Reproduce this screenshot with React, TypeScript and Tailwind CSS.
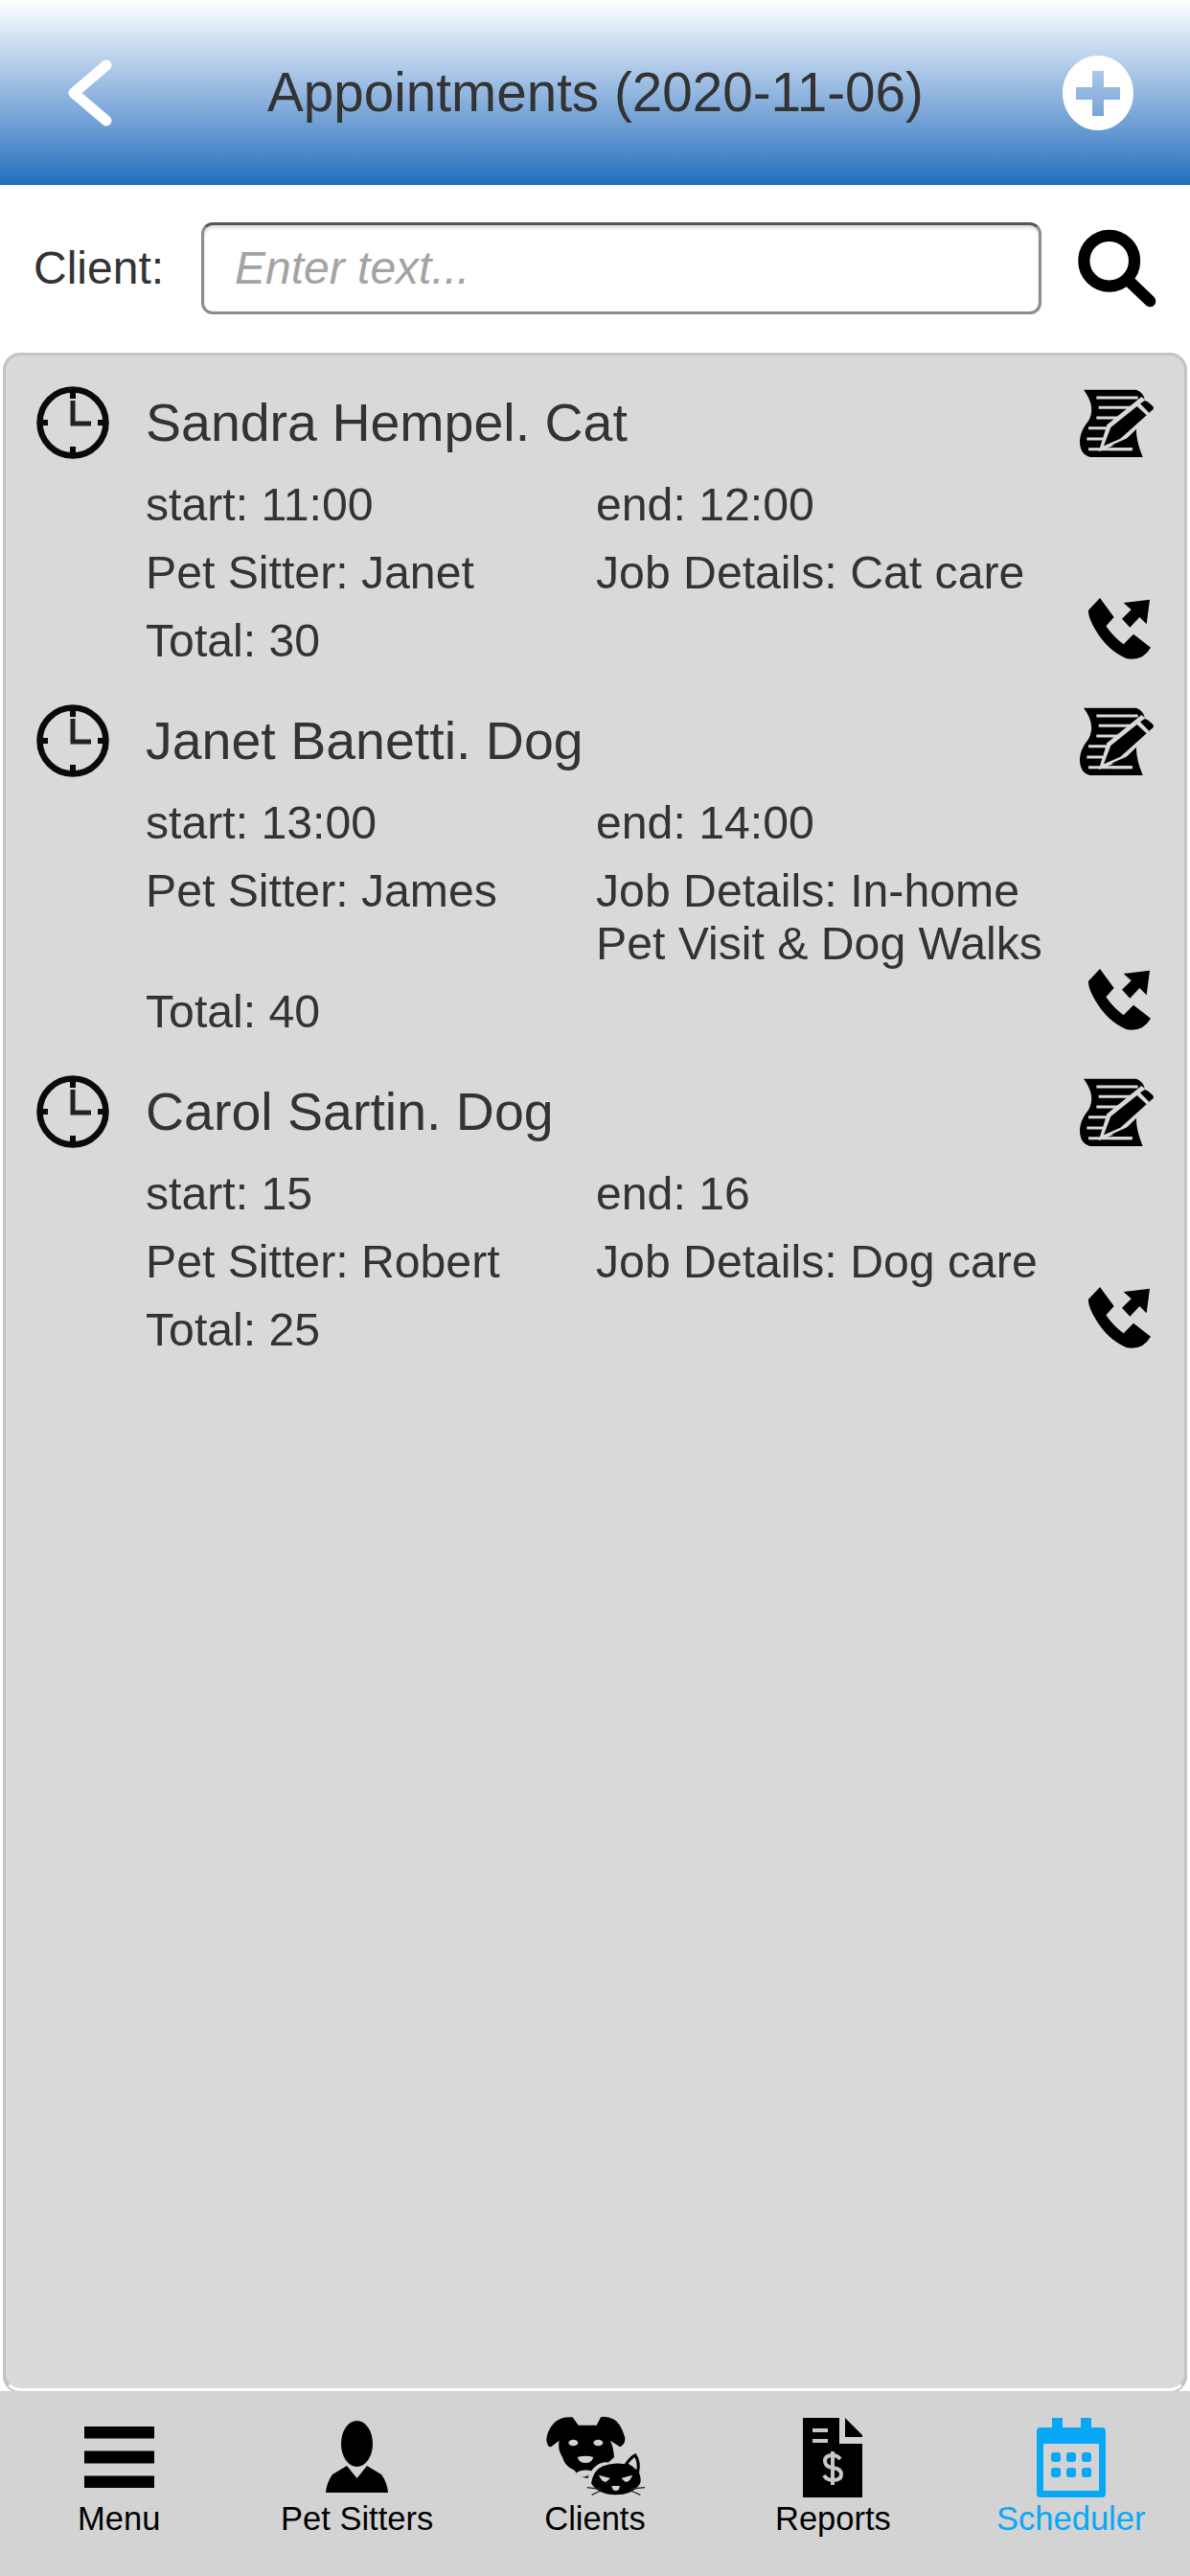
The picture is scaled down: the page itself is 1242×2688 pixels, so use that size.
import React from 'react'

type Appointment = {
  name: string
  start: string
  end: string
  sitter: string
  job: string
  total: string
}

const appointments: Appointment[] = [
  { name: 'Sandra Hempel. Cat', start: '11:00', end: '12:00', sitter: 'Janet', job: 'Cat care', total: '30' },
  { name: 'Janet Banetti. Dog', start: '13:00', end: '14:00', sitter: 'James', job: 'In-home Pet Visit & Dog Walks', total: '40' },
  { name: 'Carol Sartin. Dog', start: '15', end: '16', sitter: 'Robert', job: 'Dog care', total: '25' },
]

function ClockIcon() {
  return (
    <svg width="76" height="76" viewBox="0 0 76 76" className="block">
      <circle cx="38" cy="38" r="34.5" fill="none" stroke="#0a0a0a" strokeWidth="6.5" />
      <path d="M38 1v12M38 63v12M1 38h11M64 38h11" stroke="#0a0a0a" strokeWidth="6" fill="none" />
      <path d="M38 15v24h19" stroke="#222" strokeWidth="5" fill="none" />
    </svg>
  )
}

function NoteIcon() {
  return (
    <svg width="100" height="90" viewBox="0 0 300 270" className="block -mx-[11px] -my-[9px]">
      <path d="M45 32H210Q232 40 237 65L215 130Q200 170 230 243H65Q32 235 33 190Q35 160 60 130Q85 85 45 32Z" fill="#000" />
      <path d="M85 57H215M92 88H195M85 120H165M60 152H130M55 186H105M60 218H195" stroke="#d9d9d9" strokeWidth="9" fill="none" />
      <path d="M92 226L118 142 226 54 275 92 170 194Z" fill="#d9d9d9" />
      <path d="M108 208L130 150 212 84 242 112 160 185Z" fill="#000" />
      <path d="M222 76L236 66Q244 66 262 84Q266 90 262 94L250 104Z" fill="#000" />
      <path d="M134 205L185 182 204 178 206 206H134Z" fill="#000" />
      <path d="M130 218H198" stroke="#d9d9d9" strokeWidth="9" fill="none" />
    </svg>
  )
}

function PhoneIcon() {
  return (
    <svg width="65" height="65" viewBox="0 0 195 195" className="block translate-x-[3px]">
      <path d="M36 0L0 38Q-2 60 22 100Q60 165 120 190Q170 198 195 155L141 113 110 145Q78 122 55 88L80 60Z" fill="#000" />
      <path d="M192 5L110 15 134 37 105 65 130 92 160 60 182 82Z" fill="#000" />
    </svg>
  )
}

function DogCatIcon() {
  return (
    <svg width="120" height="100" viewBox="0 0 360 300" className="block -my-2">
      <path
        d="M110 25Q75 22 55 40Q30 65 28 95Q30 118 42 118L68 98Q62 125 78 150Q85 175 105 185Q118 190 122 200Q135 218 170 215L240 150Q238 120 228 98L258 118Q275 110 274 90Q262 45 240 32Q215 20 198 25L185 50H128Z"
        fill="#000"
      />
      <ellipse cx="112" cy="105" rx="15" ry="10" fill="#d3d3d3" />
      <ellipse cx="190" cy="105" rx="15" ry="10" fill="#d3d3d3" />
      <path d="M125 150Q150 143 175 150Q170 168 150 168Q130 168 125 150Z" fill="#d3d3d3" />
      <path d="M122 198Q145 186 172 194Q160 212 138 212Q124 210 122 198Z" fill="#d3d3d3" />
      <path d="M158 210Q190 150 240 172L255 172 272 165Q290 140 310 135Q328 160 322 190Q332 220 322 240Q300 272 245 272Q185 272 165 240Z" fill="#d3d3d3" />
      <path d="M168 232Q175 190 205 178Q240 165 272 172Q290 145 308 138Q326 165 318 198Q328 225 318 238Q295 268 245 268Q190 268 168 232Z" fill="#000" />
      <path d="M284 170Q296 156 304 150Q314 168 310 190Q298 178 284 170Z" fill="#d3d3d3" />
      <path d="M192 206L228 216 214 228Q198 224 192 206ZM297 206L262 216 276 228Q292 224 297 206Z" fill="#d3d3d3" />
      <path d="M232 240H258L254 252 245 256 236 252Z" fill="#d3d3d3" />
      <path d="M155 245L198 250M170 268L198 255M336 245L292 249M322 268L292 255" stroke="#222" strokeWidth="4" fill="none" />
    </svg>
  )
}

function PersonIcon() {
  return (
    <svg width="65" height="76" viewBox="0 0 65 76" className="block">
      <ellipse cx="32.5" cy="24" rx="16.5" ry="24" fill="#000" />
      <path d="M22 47L32.5 60 43 47 58 56Q64 64 65 75H0Q1 64 7 56Z" fill="#000" />
    </svg>
  )
}

function ReportIcon() {
  return (
    <svg width="62" height="83" viewBox="0 0 62 83" className="block">
      <path d="M0 0H38V27H62V83H0Z" fill="#000" />
      <path d="M44 0L62 18V20H44Z" fill="#000" />
      <path d="M10 13H26M10 24H26" stroke="#c8c8c8" strokeWidth="4" fill="none" />
      <path d="M39 43Q36 39 31 39Q23 39 23 45Q23 51 31 52Q40 53 40 59Q40 65 31 65Q25 65 22 60M31 35V70" stroke="#c8c8c8" strokeWidth="4" fill="none" />
    </svg>
  )
}

function CalendarIcon() {
  return (
    <svg width="72" height="83" viewBox="0 0 72 83" className="block">
      <path d="M16 0H27V10H16ZM46 0H57V10H46Z" fill="#08a8f6" />
      <path d="M4 10H68Q72 10 72 14V79Q72 83 68 83H4Q0 83 0 79V14Q0 10 4 10ZM7 27V76H65V27Z" fill="#08a8f6" fillRule="evenodd" />
      <g fill="#08a8f6">
        <rect x="15" y="36" width="10" height="10" rx="3" />
        <rect x="31" y="36" width="10" height="10" rx="3" />
        <rect x="47" y="36" width="10" height="10" rx="3" />
        <rect x="15" y="52" width="10" height="10" rx="3" />
        <rect x="31" y="52" width="10" height="10" rx="3" />
        <rect x="47" y="52" width="10" height="10" rx="3" />
      </g>
    </svg>
  )
}

function MenuIcon() {
  return (
    <svg width="73" height="64" viewBox="0 0 73 64" className="block">
      <path d="M0 6h73M0 32h73M0 58h73" stroke="#000" strokeWidth="13" fill="none" />
    </svg>
  )
}

function AppointmentRow({ item }: { item: Appointment }) {
  return (
    <div className="flex pb-[21px]">
      <div className="w-[114px] shrink-0 pt-[10px]">
        <ClockIcon />
      </div>
      <div className="flex-1">
        <div className="h-[96px] mb-[2px] flex items-center text-[55.5px] leading-[60px]">{item.name}</div>
        <div className="grid grid-cols-[470px_1fr] text-[48.2px] leading-[55px]">
          <div className="py-[8px]">start: {item.start}</div>
          <div className="py-[8px]">end: {item.end}</div>
          <div className="py-[8px]">Pet Sitter: {item.sitter}</div>
          <div className="py-[8px] pr-1">Job Details: {item.job}</div>
        </div>
        <div className="py-[8px] text-[48.2px] leading-[55px]">Total: {item.total}</div>
      </div>
      <div className="w-[77px] shrink-0 flex flex-col items-center justify-between pt-3 pb-[15px]">
        <NoteIcon />
        <PhoneIcon />
      </div>
    </div>
  )
}

const tabs = [
  { label: 'Menu', icon: <MenuIcon /> },
  { label: 'Pet Sitters', icon: <PersonIcon /> },
  { label: 'Clients', icon: <DogCatIcon /> },
  { label: 'Reports', icon: <ReportIcon /> },
  { label: 'Scheduler', icon: <CalendarIcon />, active: true },
]

export default function App() {
  return (
    <div className="h-screen flex flex-col bg-white text-[#333] font-['Liberation_Sans',Arial,sans-serif]">
      <header className="h-[193px] shrink-0 grid grid-cols-[1fr_auto_1fr] items-center bg-gradient-to-b from-white to-[#1f6fbc] pl-[70px] pr-[59px]">
        <svg width="50" height="76" viewBox="0 0 50 76" className="block">
          <path d="M41 9L7 38l34 29" stroke="#fff" strokeWidth="11" strokeLinecap="round" strokeLinejoin="round" fill="none" />
        </svg>
        <h1 className="text-[56.6px] leading-[64px] font-normal -translate-x-[5px]">Appointments (2020-11-06)</h1>
        <svg width="74" height="78" viewBox="0 0 74 78" className="block justify-self-end">
          <path
            d="M37 0C57.4 0 74 17.5 74 39S57.4 78 37 78 0 60.5 0 39 16.6 0 37 0ZM31 16V33H14V46H31V63H43V46H60V33H43V16Z"
            fill="#fff"
            fillRule="evenodd"
          />
        </svg>
      </header>

      <div className="h-[175px] shrink-0 flex items-center pl-[35px] pr-[35px]">
        <label className="w-[175px] shrink-0 text-[48px] leading-[54px] -mt-[2px]">Client:</label>
        <input
          placeholder="Enter text..."
          className="w-[877px] h-[96px] -mt-[2px] shrink-0 rounded-[12px] border-[3px] border-[#8c8c8c] border-t-[#555] bg-white px-[32px] text-[48px] text-[#333] placeholder:italic placeholder:text-[#a3a3a3] shadow-[inset_0_3px_3px_rgba(0,0,0,0.12)] outline-none"
        />
        <svg width="84" height="84" viewBox="0 0 84 84" className="block ml-[38px] -mt-[2px]">
          <circle cx="33.5" cy="34" r="27" fill="none" stroke="#000" strokeWidth="12.5" />
          <path d="M54 55L77 77" stroke="#000" strokeWidth="12.5" strokeLinecap="round" fill="none" />
        </svg>
      </div>

      <main className="flex-1 mx-[3px] rounded-[18px] border-[3px] border-[#c4c4c4] border-b-white bg-[#d9d9d9] pt-[22px] pl-[32px] pr-[32px] shadow-[0_2px_0_#bdbdbd]">
        {appointments.map((item) => (
          <AppointmentRow key={item.name} item={item} />
        ))}
      </main>

      <nav className="h-[193px] shrink-0 grid grid-cols-5 bg-[#d3d3d3] pt-[27px] text-black">
        {tabs.map((tab) => (
          <div key={tab.label} className="flex flex-col items-center">
            <div className="h-[84px] flex items-center justify-center">{tab.icon}</div>
            <span className={tab.active ? 'text-[34.5px] leading-[44px] text-[#08a8f6]' : 'text-[34.5px] leading-[44px]'}>{tab.label}</span>
          </div>
        ))}
      </nav>
    </div>
  )
}
